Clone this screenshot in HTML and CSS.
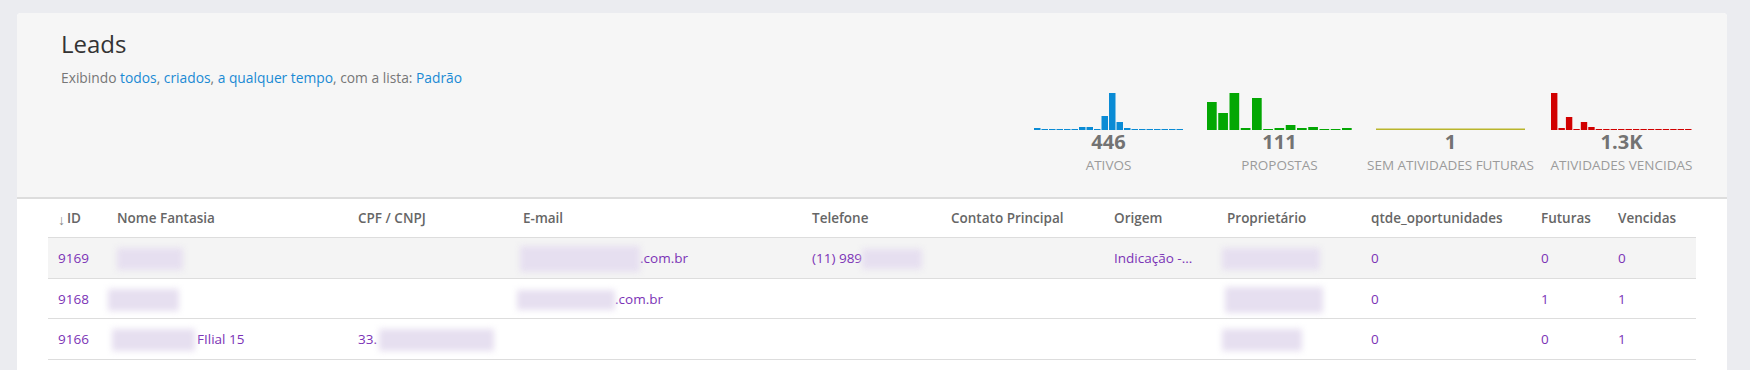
FILE: index.html
```html
<!DOCTYPE html>
<html lang="pt-BR">
<head>
    <meta charset="UTF-8">
    <title>Leads</title>
    <link rel="stylesheet" href="styles.css">
</head>
<body>
    <div class="page">
        <div class="card">
            <div class="card-header">
                <h1 class="title">Leads</h1>
                <p class="subtitle">
                    Exibindo <a href="#">todos</a>, <a href="#">criados</a>, <a href="#">a qualquer tempo</a>, com a lista: <a href="#">Padrão</a>
                </p>

                <div class="stats">
                    <div class="stat">
                        <svg class="spark" width="150" height="37" viewBox="0 0 150 37">
                            <g fill="#0a8bd5">
                                <rect x="0" y="35" width="6.5" height="2"/>
                                <rect x="7.5" y="36" width="6.5" height="1"/>
                                <rect x="15" y="36" width="6.5" height="1"/>
                                <rect x="22.5" y="36" width="6.5" height="1"/>
                                <rect x="30" y="36" width="6.5" height="1"/>
                                <rect x="37.5" y="36" width="6.5" height="1"/>
                                <rect x="45" y="34" width="6.5" height="3"/>
                                <rect x="52.5" y="34" width="6.5" height="3"/>
                                <rect x="60" y="36" width="6.5" height="1"/>
                                <rect x="67.5" y="23" width="6.5" height="14"/>
                                <rect x="75" y="0" width="6.5" height="37"/>
                                <rect x="82.5" y="29" width="6.5" height="8"/>
                                <rect x="90" y="35" width="6.5" height="2"/>
                                <rect x="97.5" y="36" width="6.5" height="1"/>
                                <rect x="105" y="36" width="6.5" height="1"/>
                                <rect x="112.5" y="36" width="6.5" height="1"/>
                                <rect x="120" y="36" width="6.5" height="1"/>
                                <rect x="127.5" y="36" width="6.5" height="1"/>
                                <rect x="135" y="36" width="6.5" height="1"/>
                                <rect x="142.5" y="36" width="6.5" height="1"/>
                            </g>
                        </svg>
                        <div class="stat-value">446</div>
                        <div class="stat-label">ATIVOS</div>
                    </div>

                    <div class="stat">
                        <svg class="spark" width="145" height="37" viewBox="0 0 145 37">
                            <g fill="#03a703">
                                <rect x="0" y="9" width="9.7" height="28"/>
                                <rect x="11.25" y="20" width="9.7" height="17"/>
                                <rect x="22.5" y="0" width="9.7" height="37"/>
                                <rect x="33.75" y="35" width="9.7" height="2"/>
                                <rect x="45" y="5" width="9.7" height="32"/>
                                <rect x="56.25" y="36" width="9.7" height="1"/>
                                <rect x="67.5" y="35" width="9.7" height="2"/>
                                <rect x="78.75" y="32" width="9.7" height="5"/>
                                <rect x="90" y="35" width="9.7" height="2"/>
                                <rect x="101.25" y="34" width="9.7" height="3"/>
                                <rect x="112.5" y="36" width="9.7" height="1"/>
                                <rect x="123.75" y="36" width="9.7" height="1"/>
                                <rect x="135" y="35" width="9.7" height="2"/>
                            </g>
                        </svg>
                        <div class="stat-value">111</div>
                        <div class="stat-label">PROPOSTAS</div>
                    </div>

                    <div class="stat">
                        <svg class="spark" width="149" height="37" viewBox="0 0 149 37">
                            <rect x="0" y="35.5" width="149" height="1.5" fill="#b9b52c"/>
                        </svg>
                        <div class="stat-value">1</div>
                        <div class="stat-label">SEM ATIVIDADES FUTURAS</div>
                    </div>

                    <div class="stat">
                        <svg class="spark" width="141" height="37" viewBox="0 0 141 37">
                            <g fill="#d10000">
                                <rect x="0" y="0" width="6.4" height="37"/>
                                <rect x="7.45" y="35" width="6.4" height="2"/>
                                <rect x="14.9" y="24" width="6.4" height="13"/>
                                <rect x="22.35" y="36" width="6.4" height="1"/>
                                <rect x="29.8" y="29" width="6.4" height="8"/>
                                <rect x="37.25" y="34" width="6.4" height="3"/>
                                <rect x="44.7" y="36" width="6.4" height="1"/>
                                <rect x="52.15" y="36" width="6.4" height="1"/>
                                <rect x="59.6" y="36" width="6.4" height="1"/>
                                <rect x="67.05" y="36" width="6.4" height="1"/>
                                <rect x="74.5" y="36" width="6.4" height="1"/>
                                <rect x="81.95" y="36" width="6.4" height="1"/>
                                <rect x="89.4" y="36" width="6.4" height="1"/>
                                <rect x="96.85" y="36" width="6.4" height="1"/>
                                <rect x="104.3" y="36" width="6.4" height="1"/>
                                <rect x="111.75" y="36" width="6.4" height="1"/>
                                <rect x="119.2" y="36" width="6.4" height="1"/>
                                <rect x="126.65" y="36" width="6.4" height="1"/>
                                <rect x="134.1" y="36" width="6.4" height="1"/>
                            </g>
                        </svg>
                        <div class="stat-value">1.3K</div>
                        <div class="stat-label">ATIVIDADES VENCIDAS</div>
                    </div>
                </div>
            </div>

            <div class="card-body">
                <table class="leads-table">
                    <colgroup>
                        <col class="col-id">
                        <col class="col-name">
                        <col class="col-doc">
                        <col class="col-email">
                        <col class="col-phone">
                        <col class="col-contact">
                        <col class="col-origin">
                        <col class="col-owner">
                        <col class="col-opps">
                        <col class="col-future">
                        <col class="col-late">
                    </colgroup>
                    <thead>
                        <tr>
                            <th><span class="sort-arrow">↓</span>ID</th>
                            <th>Nome Fantasia</th>
                            <th>CPF / CNPJ</th>
                            <th>E-mail</th>
                            <th>Telefone</th>
                            <th>Contato Principal</th>
                            <th>Origem</th>
                            <th>Proprietário</th>
                            <th>qtde_oportunidades</th>
                            <th>Futuras</th>
                            <th>Vencidas</th>
                        </tr>
                    </thead>
                    <tbody>
                        <tr class="highlight">
                            <td>9169</td>
                            <td><span class="redact redact-name1"></span></td>
                            <td></td>
                            <td><span class="redact redact-email1"></span>.com.br</td>
                            <td>(11) 989<span class="redact redact-phone"></span></td>
                            <td></td>
                            <td>Indicação -...</td>
                            <td><span class="redact redact-owner1"></span></td>
                            <td>0</td>
                            <td>0</td>
                            <td>0</td>
                        </tr>
                        <tr>
                            <td>9168</td>
                            <td><span class="redact redact-name2"></span></td>
                            <td></td>
                            <td><span class="redact redact-email2"></span>.com.br</td>
                            <td></td>
                            <td></td>
                            <td></td>
                            <td><span class="redact redact-owner2"></span></td>
                            <td>0</td>
                            <td>1</td>
                            <td>1</td>
                        </tr>
                        <tr>
                            <td>9166</td>
                            <td><span class="redact redact-name3"></span>FIlial 15</td>
                            <td>33.<span class="redact redact-doc"></span></td>
                            <td></td>
                            <td></td>
                            <td></td>
                            <td></td>
                            <td><span class="redact redact-owner3"></span></td>
                            <td>0</td>
                            <td>0</td>
                            <td>1</td>
                        </tr>
                    </tbody>
                </table>
            </div>
        </div>
    </div>
</body>
</html>
```

FILE: styles.css
```css
body {
    margin: 0;
    background-color: #ebecf0;
    font-family: "Open Sans", "Noto Sans", sans-serif;
    overflow: hidden;
}

.page {
    padding: 13px 23px 0 17px;
}

.card {
    background-color: #fff;
    border-radius: 4px 4px 0 0;
    min-height: calc(100vh - 13px);
    overflow: hidden;
}

.card-header {
    background-color: #f6f6f6;
    padding: 16px 20px 23px 44px;
    border-bottom: 2px solid #dddddd;
}

.title {
    margin: 0;
    font-size: 24px;
    line-height: 29px;
    font-weight: 400;
    color: #333;
}

.subtitle {
    margin: 11px 0 0;
    font-size: 13.8px;
    line-height: 18px;
    color: #777;
}

.subtitle a {
    color: #1a8ad4;
    text-decoration: none;
}

.stats {
    display: flex;
    justify-content: flex-end;
    margin-top: 6px;
}

.stat {
    width: 171px;
    display: flex;
    flex-direction: column;
    align-items: center;
}

.spark {
    display: block;
}

.stat-value {
    font-size: 20px;
    line-height: 24px;
    font-weight: 700;
    color: #737373;
}

.stat-label {
    margin-top: 3px;
    font-size: 13.5px;
    line-height: 17px;
    color: #9b9b9b;
    white-space: nowrap;
}

.card-body {
    padding: 0 31px;
}

.leads-table {
    width: 100%;
    table-layout: fixed;
    border-collapse: separate;
    border-spacing: 0;
    font-size: 13.5px;
}

.col-id { width: 59px; }
.col-name { width: 241px; }
.col-doc { width: 165px; }
.col-email { width: 289px; }
.col-phone { width: 139px; }
.col-contact { width: 163px; }
.col-origin { width: 113px; }
.col-owner { width: 144px; }
.col-opps { width: 170px; }
.col-future { width: 77px; }
.col-late { width: 88px; }

.leads-table th {
    padding: 10px 10px;
    line-height: 18px;
    text-align: left;
    font-weight: 600;
    color: #666;
    border-bottom: 1px solid #dddddd;
    white-space: nowrap;
}

.sort-arrow {
    display: inline-block;
    margin-right: 2px;
    font-size: 14px;
    font-weight: 400;
    color: #888;
    transform: translateY(2px);
}

.leads-table td {
    padding: 11px 10px 10px;
    line-height: 18.5px;
    color: #7b33b6;
    border-bottom: 1px solid #dddddd;
    white-space: nowrap;
}

.leads-table tr.highlight td {
    background-color: #f4f4f4;
}

/* blurred private data */
.redact {
    display: inline-block;
    vertical-align: middle;
    height: 22px;
    margin: -4px 0;
    background-color: #e6dff0;
    filter: blur(3px);
}

.redact-name1 { width: 66px; }
.redact-name2 { width: 71px; margin-left: -9px; }
.redact-name3 { width: 83px; margin-left: -5px; margin-right: 2px; }
.redact-doc { width: 115px; margin-left: 2px; }
.redact-email1 { width: 120px; margin-left: -3px; height: 26px; margin-top: -6px; margin-bottom: -6px; }
.redact-email2 { width: 98px; margin-left: -6px; height: 20px; }
.redact-phone { width: 60px; height: 20px; }
.redact-owner1 { width: 98px; margin-left: -5px; }
.redact-owner2 { width: 98px; margin-left: -2px; height: 26px; margin-top: -6px; margin-bottom: -6px; }
.redact-owner3 { width: 80px; margin-left: -5px; }
```
